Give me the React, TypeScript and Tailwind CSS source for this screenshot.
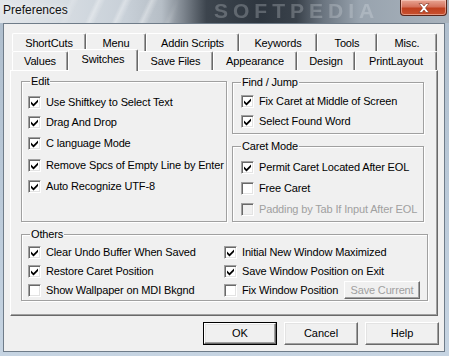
import React from "react";

const FONT = { fontFamily: '"Liberation Sans", Arial, sans-serif' };

function Check({ checked, disabled }: { checked?: boolean; disabled?: boolean }) {
  return (
    <span
      className={`relative block shrink-0 w-[13px] h-[13px] border border-t-[#a0a0a0] border-l-[#a0a0a0] border-b-white border-r-white shadow-[inset_1px_1px_0_#696969,inset_-1px_-1px_0_#e3e3e3] ${
        disabled ? "bg-[#f0f0f0]" : "bg-white"
      }`}
    >
      {checked && (
        <svg width="11" height="11" viewBox="0 0 11 11" className="absolute left-0 top-0">
          <path d="M2 4.5 L4.5 7 L9 2.5 L9 5 L4.5 9.5 L2 7 Z" fill="#000" />
        </svg>
      )}
    </span>
  );
}

function Row({
  label,
  checked,
  disabled,
  cls,
}: {
  label: string;
  checked?: boolean;
  disabled?: boolean;
  cls?: string;
}) {
  return (
    <div className={`flex items-center h-[16px] gap-[5px] ${cls ?? ""}`}>
      <Check checked={checked} disabled={disabled} />
      <span
        className={`text-[11px] leading-[13px] tracking-[-0.15px] whitespace-nowrap ${
          disabled ? "text-[#a0a0a0]" : "text-black"
        }`}
      >
        {label}
      </span>
    </div>
  );
}

function Group({ label, cls, children }: { label: string; cls: string; children: React.ReactNode }) {
  return (
    <div className={`relative border border-[#a0a0a0] shadow-[1px_1px_0_#fff,inset_1px_1px_0_#fff] ${cls}`}>
      <span className="absolute -top-[7px] left-[8px] px-[1px] bg-[#f0f0f0] text-[11px] leading-[13px] tracking-[-0.15px] text-black whitespace-nowrap">
        {label}
      </span>
      {children}
    </div>
  );
}

function Tab({ label, cls }: { label: string; cls: string }) {
  return (
    <div
      className={`flex items-center justify-center shrink-0 bg-[#f0f0f0] border-l border-t border-r border-l-white border-t-white border-r-[#696969] shadow-[inset_-1px_0_0_#a0a0a0] rounded-tl-[2px] rounded-tr-[2px] text-[11px] leading-[13px] tracking-[-0.15px] text-black whitespace-nowrap ${cls}`}
    >
      {label}
    </div>
  );
}

function Btn({ label, def, cls }: { label: string; def?: boolean; cls?: string }) {
  const inner = (
    <div className="flex-1 flex items-center justify-center bg-[#f0f0f0] border border-t-white border-l-white border-b-[#696969] border-r-[#696969] shadow-[inset_-1px_-1px_0_#a0a0a0,inset_1px_1px_0_#e3e3e3] text-[11px] leading-[13px] text-black">
      {label}
    </div>
  );
  if (def) {
    return <div className={`flex border border-black ${cls ?? ""}`}>{inner}</div>;
  }
  return <div className={`flex ${cls ?? ""}`}>{inner}</div>;
}

export default function App() {
  return (
    <div
      className="w-[449px] h-[356px] overflow-hidden bg-[linear-gradient(180deg,#aebdcc_0%,#bccbda_60%,#c6d4e2_100%)] flex flex-col"
      style={FONT}
    >
      {/* Title bar */}
      <div className="relative h-[23px] shrink-0 flex items-center overflow-hidden bg-[linear-gradient(90deg,#e2e6ea_0%,#d6dce2_14%,#c8d0d8_28%,#b6bec6_36%,#7b838c_41%,#3c444d_46%,#2e363f_58%,#39414a_66%,#6b7580_72%,#98a3ae_80%,#a9b3bd_100%)]">
        <div className="absolute inset-0 bg-[repeating-linear-gradient(115deg,rgba(255,255,255,0)_0px,rgba(255,255,255,0)_14px,rgba(255,255,255,0.35)_18px,rgba(255,255,255,0)_24px)] [mask-image:linear-gradient(90deg,transparent_12%,black_20%,black_34%,transparent_40%)]" />
        <span className="absolute left-[214px] top-0 text-[21px] leading-[21px] font-bold tracking-[5px] text-[rgba(230,235,240,0.25)] blur-[0.6px] whitespace-nowrap">
          SOFTPEDIA
        </span>
        <span className="relative pl-[3px] pb-[3px] text-[12px] leading-[14px] text-[#111] [text-shadow:0_0_6px_#fff]">
          Preferences
        </span>
        <div className="absolute left-[400px] top-0 w-[47px] h-[16px] rounded-bl-[4px] rounded-br-[4px] border border-t-0 border-[#5a2418] bg-[linear-gradient(180deg,#e8a593_0%,#d5725c_45%,#c0401f_55%,#c8512f_100%)] shadow-[inset_0_0_0_1px_rgba(255,220,210,0.5)] flex items-center justify-center">
          <svg width="12" height="10" viewBox="0 0 12 10">
            <path d="M1 0.5 L4 0.5 L6 3 L8 0.5 L11 0.5 L7.5 5 L11 9.5 L8 9.5 L6 7 L4 9.5 L1 9.5 L4.5 5 Z" fill="#fff" stroke="#7a3020" strokeWidth="0.6" />
          </svg>
        </div>
      </div>

      {/* Client area */}
      <div className="relative ml-[3px] w-[442px] h-[329px] shrink-0 border border-[#6f7c89] bg-[#f0f0f0] flex flex-col pt-[9px]">
        {/* Tabs */}
        <div className="ml-[8px] flex flex-col">
          <div className="flex h-[18px] items-stretch">
            <Tab label="ShortCuts" cls="w-[74px] pt-[1px]" />
            <Tab label="Menu" cls="w-[60px] pt-[1px]" />
            <Tab label="Addin Scripts" cls="w-[93px] pt-[1px]" />
            <Tab label="Keywords" cls="w-[78px] pt-[1px]" />
            <Tab label="Tools" cls="w-[60px] pt-[1px]" />
            <Tab label="Misc." cls="w-[60px] pt-[1px]" />
          </div>
          <div className="flex h-[19px] items-start">
            <Tab label="Values" cls="w-[56px] h-[19px] pt-[1px]" />
            <Tab label="Switches" cls="w-[70px] h-[22px] -mt-[2px] pb-[2px] relative z-10" />
            <Tab label="Save Files" cls="w-[75px] h-[19px] pt-[1px]" />
            <Tab label="Appearance" cls="w-[84px] h-[19px] pt-[1px]" />
            <Tab label="Design" cls="w-[58px] h-[19px] pt-[1px]" />
            <Tab label="PrintLayout" cls="w-[82px] h-[19px] pt-[1px]" />
          </div>
        </div>

        {/* Panel */}
        <div className="relative ml-[6px] w-[428px] h-[246px] shrink-0 border border-t-white border-l-white border-r-[#696969] border-b-[#696969] shadow-[inset_-1px_-1px_0_#a0a0a0] pt-[10px] pl-[10px] flex flex-col">
          <div className="flex gap-[5px]">
            <Group label="Edit" cls="w-[206px] h-[141px] pl-[6px] flex flex-col">
              <Row label="Use Shiftkey to Select Text" checked cls="mt-[12px]" />
              <Row label="Drag And Drop" checked cls="mt-[4px]" />
              <Row label="C language Mode" checked cls="mt-[5px]" />
              <Row label="Remove Spcs of Empty Line by Enter" checked cls="mt-[6px]" />
              <Row label="Auto Recognize UTF-8" checked cls="mt-[5px]" />
            </Group>
            <div className="flex flex-col pt-[1px]">
              <Group label="Find / Jump" cls="w-[192px] h-[52px] pl-[8px] flex flex-col">
                <Row label="Fix Caret at Middle of Screen" checked cls="mt-[10px]" />
                <Row label="Select Found Word" checked cls="mt-[4px]" />
              </Group>
              <Group label="Caret Mode" cls="mt-[12px] w-[192px] h-[76px] pl-[8px] flex flex-col">
                <Row label="Permit Caret Located After EOL" checked cls="mt-[12px]" />
                <Row label="Free Caret" cls="mt-[5px]" />
                <Row label="Padding by Tab If Input After EOL" disabled cls="mt-[5px]" />
              </Group>
            </div>
          </div>
          <Group label="Others" cls="mt-[12px] w-[407px] h-[67px] pl-[6px] pt-[8px] flex">
            <div className="w-[196px] flex flex-col">
              <Row label="Clear Undo Buffer When Saved" checked cls="h-[18px]" />
              <Row label="Restore Caret Position" checked cls="h-[18px] mt-[1px]" />
              <Row label="Show Wallpaper on MDI Bkgnd" cls="h-[18px] mt-[1px]" />
            </div>
            <div className="flex-1 flex flex-col pr-[7px]">
              <Row label="Initial New Window Maximized" checked cls="h-[18px]" />
              <Row label="Save Window Position on Exit" checked cls="h-[18px] mt-[1px]" />
              <div className="flex items-center justify-between h-[18px] mt-[1px]">
                <Row label="Fix Window Position" />
                <div className="w-[76px] h-[18px] flex items-center justify-center bg-[#f0f0f0] border border-t-white border-l-white border-b-[#696969] border-r-[#696969] shadow-[inset_-1px_-1px_0_#a0a0a0] text-[11px] leading-[13px] tracking-[-0.15px] text-[#a0a0a0]">
                  Save Current
                </div>
              </div>
            </div>
          </Group>
        </div>

        {/* Buttons */}
        <div className="flex justify-end gap-[7px] mt-[6px] pr-[5px]">
          <Btn label="OK" def cls="w-[74px] h-[23px]" />
          <Btn label="Cancel" cls="w-[74px] h-[23px]" />
          <Btn label="Help" cls="w-[74px] h-[23px]" />
        </div>
      </div>
    </div>
  );
}
